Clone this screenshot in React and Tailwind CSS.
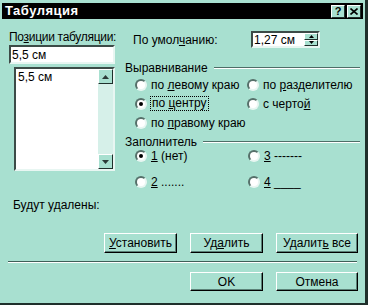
import React from "react";

const Radio = ({ checked }) => (
  <span className="w-[12px] h-[12px] shrink-0 rounded-full bg-white border-[2px] border-t-[#56706a] border-l-[#56706a] border-r-[#e8f6f2] border-b-[#e8f6f2] flex items-center justify-center">
    {checked && <span className="w-[4px] h-[4px] rounded-full bg-black" />}
  </span>
);

const Option = ({ checked, children, focus }) => (
  <div className="flex items-center gap-[3px] whitespace-nowrap">
    <Radio checked={checked} />
    <span className={focus ? "border border-dotted border-black px-[1px] leading-[13px]" : "px-[1px]"}>
      {children}
    </span>
  </div>
);

const Button = ({ children, w }) => (
  <button
    className={
      "h-full flex items-center justify-center bg-[#a8e0d0] border border-t-white border-l-white border-r-black border-b-black shadow-[inset_-1px_-1px_0_#5c8278] " +
      w
    }
  >
    <span className="whitespace-pre">{children}</span>
  </button>
);

const Arrow = ({ up }) => (
  <div className="w-[15px] h-[15px] bg-[#a8e0d0] border border-t-white border-l-white border-r-[#1f2f2b] border-b-[#1f2f2b] flex items-center justify-center">
    <svg width="7" height="4" viewBox="0 0 7 4">
      {up ? <polygon points="3.5,0 7,4 0,4" fill="#2b3a37" /> : <polygon points="0,0 7,0 3.5,4" fill="#2b3a37" />}
    </svg>
  </div>
);

const GroupHeader = ({ children }) => (
  <div className="h-[14px] flex items-center gap-[6px]">
    <span>{children}</span>
    <div className="flex-1 border-t border-t-[#4e6e67] border-b border-b-white" />
  </div>
);

export default function App() {
  return (
    <div className="w-[368px] h-[305px] flex flex-col bg-[#a8e0d0] border-r-[3px] border-b-[2px] border-[#1f2f2b] font-['Liberation_Sans',Arial,sans-serif] text-[12px] text-black leading-[14px]">
      {/* title bar */}
      <div className="mt-[3px] mx-[2px] h-[16px] bg-black flex items-center justify-between pl-[3px] pr-[2px]">
        <span className="text-white font-bold text-[13px] tracking-[0.5px]">Табуляция</span>
        <div className="flex gap-[2px]">
          <div className="w-[14px] h-[13px] bg-[#a8e0d0] border border-t-white border-l-white border-r-[#1f2f2b] border-b-[#1f2f2b] flex items-center justify-center font-bold text-[11px] leading-none">
            ?
          </div>
          <div className="w-[14px] h-[13px] bg-[#a8e0d0] border border-t-white border-l-white border-r-[#1f2f2b] border-b-[#1f2f2b] flex items-center justify-center">
            <svg width="8" height="7" viewBox="0 0 8 7">
              <path d="M0.5 0.5 L7.5 6.5 M7.5 0.5 L0.5 6.5" stroke="black" strokeWidth="1.6" />
            </svg>
          </div>
        </div>
      </div>

      {/* main */}
      <div className="flex">
        {/* left column */}
        <div className="ml-[9px] w-[106px] pt-[11px] flex flex-col">
          <div className="h-[14px] whitespace-nowrap tracking-[-0.3px]">
            По<span className="underline">з</span>иции табуляции:
          </div>
          <div className="mt-[1px] h-[19px] bg-white border-[2px] border-t-[#3c4b47] border-l-[#3c4b47] border-r-[#e8f6f2] border-b-[#e8f6f2] flex items-center pl-[1px]">
            5,5 см
          </div>
          <div className="mt-[3px] ml-[5px] h-[104px] bg-white border-[2px] border-t-[#3c4b47] border-l-[#3c4b47] border-r-[#e8f6f2] border-b-[#e8f6f2] flex">
            <div className="flex-1 pl-[2px] pt-[1px]">5,5 см</div>
            <div className="w-[15px] flex flex-col justify-between bg-[#d6f0e9]">
              <Arrow up />
              <Arrow />
            </div>
          </div>
        </div>

        {/* right column */}
        <div className="ml-[10px] w-[235px] pt-[12px] flex flex-col">
          <div className="h-[17px] flex items-center">
            <span className="pl-[8px] w-[126px] whitespace-nowrap">
              По умол<span className="underline">ч</span>анию:
            </span>
            <div className="w-[69px] h-[17px] bg-white border-[2px] border-t-[#3c4b47] border-l-[#3c4b47] border-r-[#e8f6f2] border-b-[#e8f6f2] flex items-center">
              <span className="flex-1 pl-[1px]">1,27 см</span>
              <div className="w-[14px] h-full flex flex-col">
                <div className="flex-1 bg-[#a8e0d0] border border-t-white border-l-white border-r-[#1f2f2b] border-b-[#1f2f2b] flex items-center justify-center">
                  <svg width="5" height="3" viewBox="0 0 5 3">
                    <polygon points="2.5,0 5,3 0,3" fill="black" />
                  </svg>
                </div>
                <div className="flex-1 bg-[#a8e0d0] border border-t-white border-l-white border-r-[#1f2f2b] border-b-[#1f2f2b] flex items-center justify-center">
                  <svg width="5" height="3" viewBox="0 0 5 3">
                    <polygon points="0,0 5,0 2.5,3" fill="black" />
                  </svg>
                </div>
              </div>
            </div>
          </div>

          <div className="mt-[13px]">
            <GroupHeader>Выравнивание</GroupHeader>
          </div>
          <div className="grid grid-cols-[112px_1fr] pl-[10px]">
            <div className="h-[19px] flex items-center">
              <Option>
                по <span className="underline">л</span>евому краю
              </Option>
            </div>
            <div className="h-[19px] flex items-center">
              <Option>
                по <span className="underline">р</span>азделителю
              </Option>
            </div>
            <div className="h-[19px] flex items-center">
              <Option checked focus>
                по <span className="underline">ц</span>ентру
              </Option>
            </div>
            <div className="h-[19px] flex items-center">
              <Option>
                с черто<span className="underline">й</span>
              </Option>
            </div>
            <div className="h-[19px] flex items-center col-span-2">
              <Option>
                по <span className="underline">п</span>равому краю
              </Option>
            </div>
          </div>

          <div className="mt-[3px]">
            <GroupHeader>Заполнитель</GroupHeader>
          </div>
          <div className="grid grid-cols-[113px_1fr] pl-[10px] gap-y-[12px]">
            <div className="h-[14px] flex items-center">
              <Option checked>
                <span className="underline">1</span> (нет)
              </Option>
            </div>
            <div className="h-[14px] flex items-center">
              <Option>
                <span className="underline">3</span> -------
              </Option>
            </div>
            <div className="h-[14px] flex items-center">
              <Option>
                <span className="underline">2</span> .......
              </Option>
            </div>
            <div className="h-[14px] flex items-center">
              <Option>
                <span className="underline">4</span> ____
              </Option>
            </div>
          </div>
        </div>
      </div>

      <div className="ml-[13px] mt-[9px] h-[14px]">Будут удалены:</div>

      <div className="mt-[21px] h-[20px] flex justify-end gap-[13px] pr-[7px]">
        <Button w="w-[73px]">
          <span className="underline">У</span>становить
        </Button>
        <Button w="w-[73px]">
          Уд<span className="underline">а</span>лить
        </Button>
        <Button w="w-[82px]">
          Удалит<span className="underline">ь</span> все
        </Button>
      </div>

      <div className="mt-[8px] mx-[8px] border-t border-t-[#3f5f58] border-b border-b-white" />

      <div className="mt-[9px] h-[19px] flex justify-end gap-[13px] pr-[7px]">
        <Button w="w-[73px]">OK</Button>
        <Button w="w-[82px]">Отмена</Button>
      </div>
    </div>
  );
}
